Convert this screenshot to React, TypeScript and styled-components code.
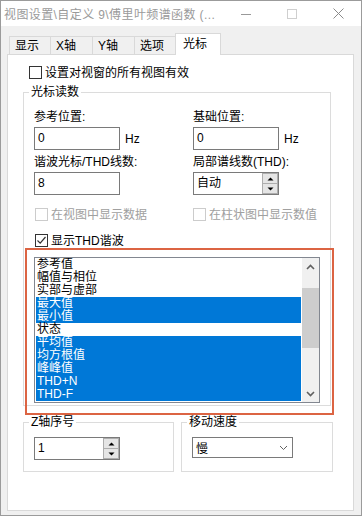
import styled, { createGlobalStyle } from "styled-components";

const GlobalStyle = createGlobalStyle`
  html, body {
    margin: 0;
    padding: 0;
    background: #ffffff;
  }
  body {
    font-family: "Liberation Sans", "Noto Sans CJK SC", sans-serif;
    font-size: 12px;
    color: #000000;
  }
  * {
    box-sizing: border-box;
  }
`;

const tabs = [
  { label: "显示", width: 42 },
  { label: "X轴", width: 43 },
  { label: "Y轴", width: 43 },
  { label: "选项", width: 42 },
  { label: "光标", width: 46, active: true },
];

const readouts = [
  { label: "参考值", selected: false },
  { label: "幅值与相位", selected: false },
  { label: "实部与虚部", selected: false },
  { label: "最大值", selected: true },
  { label: "最小值", selected: true },
  { label: "状态", selected: false },
  { label: "平均值", selected: true },
  { label: "均方根值", selected: true },
  { label: "峰峰值", selected: true },
  { label: "THD+N", selected: true },
  { label: "THD-F", selected: true },
];

const Window = styled.div`
  width: 362px;
  height: 516px;
  border: 1px solid #9b9b9b;
  background: #f0f0f0;
  display: flex;
  flex-direction: column;
`;

const TitleBar = styled.div`
  height: 25px;
  background: #ffffff;
  display: flex;
  align-items: center;
  padding-left: 3px;
`;

const Title = styled.span`
  color: #9a9a9a;
  font-size: 12px;
  letter-spacing: 0.4px;
  white-space: nowrap;
`;

const Controls = styled.div`
  margin-left: auto;
  display: flex;
  height: 100%;
`;

const ControlButton = styled.div`
  width: 46px;
  height: 100%;
  display: flex;
  align-items: center;
  justify-content: center;
`;

const Body = styled.div`
  flex: 1;
  display: flex;
  flex-direction: column;
  padding: 7px 7px 4px 6px;
`;

const TabStrip = styled.div`
  display: flex;
  align-items: flex-end;
  height: 21px;
  padding-left: 2px;
`;

const Tab = styled.div<{ $width: number; $active?: boolean }>`
  width: ${(p) => p.$width}px;
  height: ${(p) => (p.$active ? 22 : 18)}px;
  margin-left: -1px;
  margin-bottom: ${(p) => (p.$active ? -1 : 0)}px;
  padding: 0 0 ${(p) => (p.$active ? 2 : 0)}px ${(p) => (p.$active ? 7 : 5)}px;
  border: 1px solid #d9d9d9;
  border-bottom: none;
  background: ${(p) => (p.$active ? "#ffffff" : "#f0f0f0")};
  position: relative;
  z-index: ${(p) => (p.$active ? 1 : 0)};
  display: flex;
  align-items: center;
  font-size: 12px;
  line-height: 14px;
  &:first-child {
    margin-left: 0;
  }
`;

const Panel = styled.div`
  flex: 1;
  position: relative;
  background: #ffffff;
  border: 1px solid #d9d9d9;
  padding: 10px 0 0 15px;
  display: flex;
  flex-direction: column;
`;

const CheckRow = styled.label<{ $indent?: number; $disabled?: boolean }>`
  display: flex;
  align-items: center;
  gap: 3px;
  height: 15px;
  margin-left: ${(p) => p.$indent ?? 0}px;
  color: ${(p) => (p.$disabled ? "#a0a0a0" : "#000000")};
  line-height: 14px;
  white-space: nowrap;
`;

const Box = styled.span<{ $disabled?: boolean }>`
  width: 13px;
  height: 13px;
  flex: none;
  border: 1px solid ${(p) => (p.$disabled ? "#cccccc" : "#333333")};
  background: #ffffff;
  display: flex;
  align-items: center;
  justify-content: center;
`;

const Group = styled.div<{ $width: number; $top: number }>`
  width: ${(p) => p.$width}px;
  margin-top: ${(p) => p.$top}px;
  border: 1px solid #dcdcdc;
  display: flex;
  flex-direction: column;
`;

const Caption = styled.span`
  align-self: flex-start;
  margin: -8px 0 0 5px;
  padding: 0 2px;
  background: #ffffff;
  line-height: 14px;
  white-space: nowrap;
`;

const GroupBody = styled.div<{ $pad: string }>`
  padding: ${(p) => p.$pad};
  display: flex;
  flex-direction: column;
`;

const FieldGrid = styled.div`
  display: grid;
  grid-template-columns: 159px 1fr;
  row-gap: 5px;
`;

const Field = styled.div`
  display: flex;
  flex-direction: column;
  gap: 3px;
`;

const FieldLabel = styled.span`
  line-height: 14px;
  white-space: nowrap;
`;

const InputRow = styled.div`
  display: flex;
  align-items: center;
  gap: 5px;
`;

const TextBox = styled.div<{ $width?: number }>`
  width: ${(p) => p.$width ?? 86}px;
  height: 23px;
  border: 1px solid #7a7a7a;
  background: #ffffff;
  padding-left: 3px;
  line-height: 21px;
`;

const Unit = styled.span`
  line-height: 14px;
`;

const Spin = styled.div`
  width: 86px;
  height: 23px;
  border: 1px solid #7a7a7a;
  background: #ffffff;
  display: flex;
`;

const SpinText = styled.div`
  flex: 1;
  padding-left: 3px;
  line-height: 21px;
`;

const SpinButtons = styled.div`
  width: 17px;
  display: flex;
  flex-direction: column;
  padding: 0 0 0 1px;
`;

const SpinButton = styled.div`
  flex: 1;
  border: 1px solid #adadad;
  background: #e5e5e5;
  display: flex;
  align-items: center;
  justify-content: center;
  & + & {
    margin-top: -1px;
  }
`;

const CheckGrid = styled.div<{ $top: number }>`
  display: grid;
  grid-template-columns: 159px 1fr;
  margin-top: ${(p) => p.$top}px;
`;

const ListBox = styled.div`
  margin-top: 9px;
  width: 286px;
  height: 146px;
  border: 1px solid #828790;
  background: #ffffff;
  display: flex;
`;

const Items = styled.div`
  flex: 1;
  padding: 0 1px;
  overflow: hidden;
`;

const Item = styled.div<{ $selected: boolean }>`
  height: 13px;
  line-height: 13px;
  padding-left: 1px;
  white-space: nowrap;
  background: ${(p) => (p.$selected ? "#0078d7" : "transparent")};
  color: ${(p) => (p.$selected ? "#ffffff" : "#000000")};
`;

const ScrollBar = styled.div`
  width: 17px;
  background: #f0f0f0;
  display: flex;
  flex-direction: column;
`;

const ScrollArrow = styled.div`
  height: 17px;
  display: flex;
  align-items: center;
  justify-content: center;
`;

const Track = styled.div`
  flex: 1;
  padding-top: 13px;
`;

const Thumb = styled.div`
  height: 60px;
  background: #cdcdcd;
`;

const BottomRow = styled.div`
  display: flex;
  gap: 7px;
`;

const Select = styled.div`
  width: 101px;
  height: 21px;
  border: 1px solid #7a7a7a;
  background: #ffffff;
  display: flex;
  align-items: center;
  justify-content: space-between;
  padding: 0 4px 0 3px;
`;

const Highlight = styled.div`
  position: absolute;
  left: 17px;
  top: 193px;
  width: 309px;
  height: 167px;
  border: 2px solid #dc6443;
  pointer-events: none;
`;

const Check = ({ checked }: { checked?: boolean }) =>
  checked ? (
    <svg width="11" height="11" viewBox="0 0 11 11">
      <path d="M1.5 5.5 L4.2 8.2 L9.5 2" fill="none" stroke="#333" strokeWidth="1.2" />
    </svg>
  ) : null;

const UpTri = () => (
  <svg width="7" height="4" viewBox="0 0 7 4">
    <path d="M0.5 3.5 L3.5 0.5 L6.5 3.5 Z" fill="#000" />
  </svg>
);

const DownTri = () => (
  <svg width="7" height="4" viewBox="0 0 7 4">
    <path d="M0.5 0.5 L3.5 3.5 L6.5 0.5 Z" fill="#000" />
  </svg>
);

const Chevron = ({ up }: { up?: boolean }) => (
  <svg width="9" height="6" viewBox="0 0 9 6">
    <path
      d={up ? "M1 5 L4.5 1.5 L8 5" : "M1 1 L4.5 4.5 L8 1"}
      fill="none"
      stroke="#606060"
      strokeWidth="1.6"
    />
  </svg>
);

export default function App() {
  return (
    <>
      <GlobalStyle />
      <Window>
        <TitleBar>
          <Title>视图设置\自定义 9\傅里叶频谱函数 (...</Title>
          <Controls>
            <ControlButton>
              <svg width="10" height="10" viewBox="0 0 10 10">
                <path d="M0 5.5 H10" stroke="#999" strokeWidth="1" />
              </svg>
            </ControlButton>
            <ControlButton>
              <svg width="10" height="10" viewBox="0 0 10 10">
                <rect x="0.5" y="0.5" width="9" height="9" fill="none" stroke="#cfcfcf" />
              </svg>
            </ControlButton>
            <ControlButton>
              <svg width="11" height="11" viewBox="0 0 11 11">
                <path d="M0.5 0.5 L10.5 10.5 M10.5 0.5 L0.5 10.5" stroke="#8a8a8a" strokeWidth="1" />
              </svg>
            </ControlButton>
          </Controls>
        </TitleBar>
        <Body>
          <TabStrip>
            {tabs.map((t) => (
              <Tab key={t.label} $width={t.width} $active={t.active}>
                {t.label}
              </Tab>
            ))}
          </TabStrip>
          <Panel>
            <CheckRow $indent={6}>
              <Box />
              设置对视窗的所有视图有效
            </CheckRow>

            <Group $width={308} $top={12}>
              <Caption>光标读数</Caption>
              <GroupBody $pad="11px 10px 2px 10px">
                <FieldGrid>
                  <Field>
                    <FieldLabel>参考位置:</FieldLabel>
                    <InputRow>
                      <TextBox>0</TextBox>
                      <Unit>Hz</Unit>
                    </InputRow>
                  </Field>
                  <Field>
                    <FieldLabel>基础位置:</FieldLabel>
                    <InputRow>
                      <TextBox>0</TextBox>
                      <Unit>Hz</Unit>
                    </InputRow>
                  </Field>
                  <Field>
                    <FieldLabel>谐波光标/THD线数:</FieldLabel>
                    <TextBox>8</TextBox>
                  </Field>
                  <Field>
                    <FieldLabel>局部谱线数(THD):</FieldLabel>
                    <Spin>
                      <SpinText>自动</SpinText>
                      <SpinButtons>
                        <SpinButton>
                          <UpTri />
                        </SpinButton>
                        <SpinButton>
                          <DownTri />
                        </SpinButton>
                      </SpinButtons>
                    </Spin>
                  </Field>
                </FieldGrid>

                <CheckGrid $top={12}>
                  <CheckRow $indent={1} $disabled>
                    <Box $disabled />
                    在视图中显示数据
                  </CheckRow>
                  <CheckRow $disabled>
                    <Box $disabled />
                    在柱状图中显示数值
                  </CheckRow>
                </CheckGrid>

                <CheckGrid $top={11}>
                  <CheckRow $indent={1}>
                    <Box>
                      <Check checked />
                    </Box>
                    显示THD谐波
                  </CheckRow>
                </CheckGrid>

                <ListBox>
                  <Items>
                    {readouts.map((r) => (
                      <Item key={r.label} $selected={r.selected}>
                        {r.label}
                      </Item>
                    ))}
                  </Items>
                  <ScrollBar>
                    <ScrollArrow>
                      <Chevron up />
                    </ScrollArrow>
                    <Track>
                      <Thumb />
                    </Track>
                    <ScrollArrow>
                      <Chevron />
                    </ScrollArrow>
                  </ScrollBar>
                </ListBox>
              </GroupBody>
            </Group>

            <BottomRow>
              <Group $width={151} $top={16}>
                <Caption>Z轴序号</Caption>
                <GroupBody $pad="8px 10px 11px 10px">
                  <Spin>
                    <SpinText>1</SpinText>
                    <SpinButtons>
                      <SpinButton>
                        <UpTri />
                      </SpinButton>
                      <SpinButton>
                        <DownTri />
                      </SpinButton>
                    </SpinButtons>
                  </Spin>
                </GroupBody>
              </Group>
              <Group $width={152} $top={16}>
                <Caption>移动速度</Caption>
                <GroupBody $pad="8px 10px 11px 10px">
                  <Select>
                    <span>慢</span>
                    <svg width="9" height="6" viewBox="0 0 9 6">
                      <path d="M1 1 L4.5 4.5 L8 1" fill="none" stroke="#606060" strokeWidth="1" />
                    </svg>
                  </Select>
                </GroupBody>
              </Group>
            </BottomRow>

            <Highlight />
          </Panel>
        </Body>
      </Window>
    </>
  );
}
